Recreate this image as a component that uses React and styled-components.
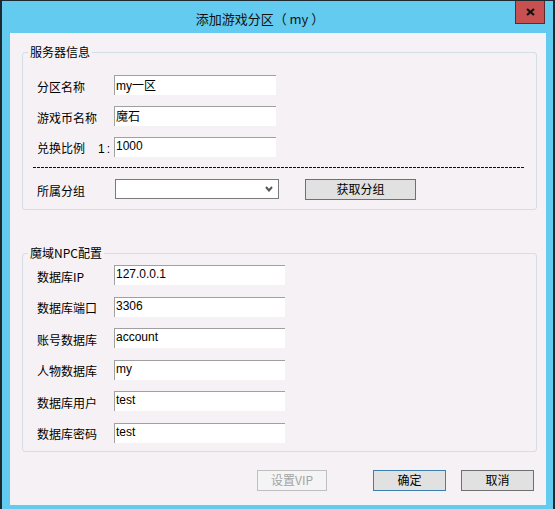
import React from 'react'
import styled, { createGlobalStyle } from 'styled-components'

const GlobalStyle = createGlobalStyle`
  html, body { margin: 0; padding: 0; background: #ffffff; }
  body { font-family: "Noto Sans CJK SC", "Liberation Sans", sans-serif; }
  * { box-sizing: border-box; }
`

const serverRows = [
  { label: '分区名称', value: 'my一区' },
  { label: '游戏币名称', value: '魔石' },
  { label: '兑换比例', ratio: '1:', value: '1000' },
]

const npcRows = [
  { label: '数据库IP', value: '127.0.0.1' },
  { label: '数据库端口', value: '3306' },
  { label: '账号数据库', value: 'account' },
  { label: '人物数据库', value: 'my' },
  { label: '数据库用户', value: 'test' },
  { label: '数据库密码', value: 'test' },
]

export default function App() {
  return (
    <>
      <GlobalStyle />
      <Window>
        <TitleBar>
          <Title>添加游戏分区（ my ）</Title>
          <CloseButton>
            <svg width="9" height="8" viewBox="0 0 9 8">
              <path d="M1 1 L8 7 M8 1 L1 7" stroke="#111" strokeWidth="2.2" fill="none" />
            </svg>
          </CloseButton>
        </TitleBar>
        <Client>
          <Group>
            <Legend>服务器信息</Legend>
            <GroupBody $top={16} $bottom={10}>
              <Rows $gap={11}>
                {serverRows.map((r) => (
                  <Row key={r.label}>
                    <Label>
                      {r.label}
                      {r.ratio && <Ratio>{r.ratio}</Ratio>}
                    </Label>
                    <TextBox $width={162} defaultValue={r.value} />
                  </Row>
                ))}
              </Rows>
              <Separator />
              <Row>
                <Label $width={78}>所属分组</Label>
                <Combo>
                  <svg width="8" height="6" viewBox="0 0 8 6">
                    <path d="M1 1 L4 4.5 L7 1" stroke="#555" strokeWidth="2" fill="none" />
                  </svg>
                </Combo>
                <Button $width={111} $height={21} $gapLeft={26}>获取分组</Button>
              </Row>
            </GroupBody>
          </Group>

          <Group $spaced>
            <Legend>魔域NPC配置</Legend>
            <GroupBody $top={5} $bottom={8}>
              <Rows $gap={11.6}>
                {npcRows.map((r) => (
                  <Row key={r.label}>
                    <Label>{r.label}</Label>
                    <TextBox $width={171} defaultValue={r.value} />
                  </Row>
                ))}
              </Rows>
            </GroupBody>
          </Group>

          <Footer>
            <Button $width={70} $variant="disabled" disabled>设置VIP</Button>
            <Button $width={73} $gapLeft={46} $variant="default">确定</Button>
            <Button $width={73} $gapLeft={15}>取消</Button>
          </Footer>
        </Client>
      </Window>
    </>
  )
}

const Window = styled.div`
  position: relative;
  display: flex;
  flex-direction: column;
  width: 555px;
  height: 509px;
  background: #62cbef;
  border-left: 2px solid #1e2a30;
  border-right: 2px solid #1e2a30;
  border-top: 1px solid #1e2a30;
  overflow: hidden;
`

const TitleBar = styled.div`
  height: 32px;
  display: flex;
  align-items: center;
  justify-content: center;
  padding: 3px 35px 0 0;
`

const Title = styled.div`
  font-size: 13px;
  color: #111;
  white-space: pre;
`

const CloseButton = styled.div`
  position: absolute;
  top: -1px;
  right: 8px;
  width: 30px;
  height: 24px;
  background: #c75050;
  border: 1px solid #5c2a2a;
  display: flex;
  align-items: center;
  justify-content: center;
`

const Client = styled.div`
  flex: 1;
  margin: 0 7px 4px 8px;
  background: #f5f1f5;
  padding-top: 12px;
  display: flex;
  flex-direction: column;
`

const Group = styled.fieldset`
  margin: ${(p) => (p.$spaced ? '36px' : '0')} 9px 0 12px;
  padding: 0;
  min-inline-size: 0;
  border: 1px solid #d3dee6;
  border-radius: 3px;
`

const Legend = styled.legend`
  margin-left: 5px;
  padding: 0 2px;
  font-size: 12px;
  line-height: 14px;
  color: #000;
`

const GroupBody = styled.div`
  padding: ${(p) => p.$top}px 11px ${(p) => p.$bottom}px 14px;
`

const Rows = styled.div`
  display: flex;
  flex-direction: column;
  gap: ${(p) => p.$gap}px;
`

const Row = styled.div`
  display: flex;
  align-items: center;
  height: 20px;
`

const Label = styled.div`
  width: ${(p) => p.$width || 77}px;
  flex-shrink: 0;
  padding-top: 3px;
  font-size: 12px;
  line-height: 14px;
  color: #000;
  white-space: nowrap;
`

const Ratio = styled.span`
  margin-left: 13px;
  font-family: "Liberation Sans", sans-serif;
  letter-spacing: 2px;
`

const TextBox = styled.input`
  width: ${(p) => p.$width}px;
  height: 20px;
  margin: 0;
  padding: 0 0 3px 1px;
  border: none;
  border-top: 1px solid #a0a0a0;
  border-left: 1px solid #a0a0a0;
  background: #ffffff;
  font-family: "Liberation Sans", "Noto Sans CJK SC", sans-serif;
  font-size: 12px;
  color: #000;
  outline: none;
`

const Separator = styled.div`
  height: 1px;
  margin: 10px 0 11px -4px;
  background: repeating-linear-gradient(to right, #111 0 3px, transparent 3px 4px);
`

const Combo = styled.div`
  width: 164px;
  height: 20px;
  border: 1px solid #7a7a7a;
  background: #ffffff;
  display: flex;
  align-items: center;
  justify-content: flex-end;
  padding-right: 5px;
`

const Button = styled.button`
  width: ${(p) => p.$width}px;
  height: ${(p) => p.$height || 21}px;
  margin: 0 0 0 ${(p) => p.$gapLeft || 0}px;
  padding: 0;
  font-family: "Noto Sans CJK SC", "Liberation Sans", sans-serif;
  font-size: 12px;
  line-height: 14px;
  color: ${(p) => (p.$variant === 'disabled' ? '#a3a3a3' : '#000')};
  background: ${(p) => (p.$variant === 'disabled' ? '#f4f4f4' : '#e1e1e1')};
  border: 1px solid
    ${(p) =>
      p.$variant === 'disabled' ? '#bfbfbf' : p.$variant === 'default' ? '#3c7fb1' : '#707070'};
  border-radius: 0;
`

const Footer = styled.div`
  display: flex;
  justify-content: flex-end;
  margin-top: 18px;
  padding-right: 12px;
`
